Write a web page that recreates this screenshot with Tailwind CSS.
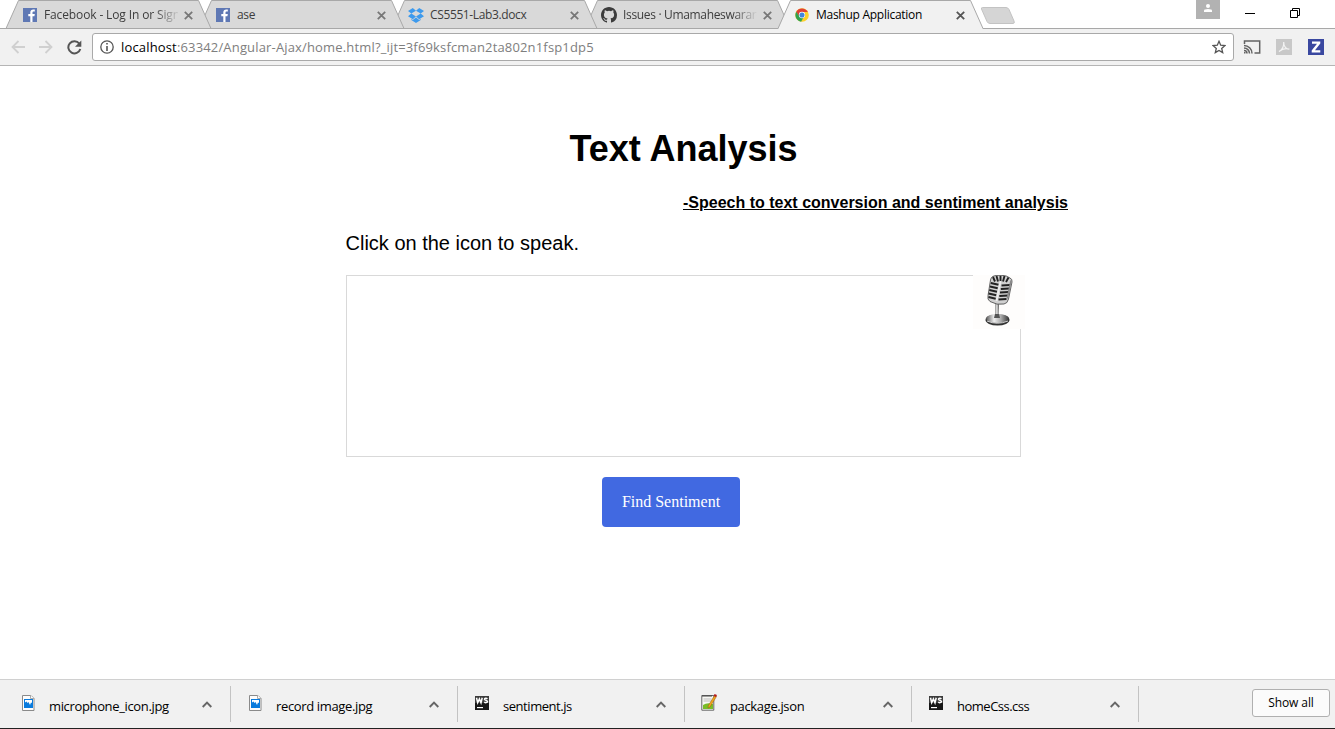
<!DOCTYPE html>
<html lang="en">
<head>
<meta charset="utf-8">
<title>Mashup Application</title>
<script src="https://cdn.jsdelivr.net/npm/@tailwindcss/browser@4"></script>
</head>
<body class="w-[1335px] h-[729px] overflow-hidden bg-white flex flex-col font-['Open_Sans','Noto_Sans',sans-serif] text-black">
<svg class="hidden">
  <symbol id="fb" viewBox="0 0 14 14"><path fill="#5f78b4" d="M0 0h14v14H0z"/><path fill="#fff" d="M7.3 14V8.3H5.3V6.1h2V4.6c0-2 1.1-3.1 3-3.1.8 0 1.5.1 1.5.1v2h-1.1c-.9 0-1.2.5-1.2 1.1v1.4h2.3l-.4 2.2H9.5V14z"/></symbol>
  <symbol id="close" viewBox="0 0 9 9"><path d="M.8.8l7.4 7.4M8.2.8L.8 8.2" stroke="currentColor" stroke-width="1.8" fill="none"/></symbol>
  <symbol id="chev" viewBox="0 0 10 7"><path d="M.7 6L5 1.6 9.300 6" stroke="#666" stroke-width="1.9" fill="none"/></symbol>
  <symbol id="img" viewBox="0 0 13 16"><path fill="#fdfdfd" stroke="#8a8a8a" d="M.5.5h8.500l3 3v12H.5z"/><path fill="#fff" stroke="#aaa" d="M8.500.5v3h3.500"/><path fill="#0a7bdd" d="M2 4h9v9H2z"/><path fill="#fff" d="M3 5h7v3L9 7.500 8 10 6.500 7 5.500 8 4.500 6.500 3 7.500z"/></symbol>
  <symbol id="ws" viewBox="0 0 14 14"><path fill="#161616" d="M0 0h14v14H0z"/><path d="M0 0h14v7H0z" fill="#3c3c3c"/><path d="M1.500 1.800l1.200 5L4.400 3l1.600 3.800 1.200-5M12.400 2.900c-.8-.8-2.900-.8-2.900.4 0 1.400 3 .7 3 2.200 0 1.400-2.300 1.400-3.200.5" fill="none" stroke="#fff" stroke-width="1.500"/><path d="M2 11h6v1.200H2z" fill="#fff"/></symbol>
</svg>

<header class="relative h-[29px] shrink-0">
  <svg class="absolute left-0 top-0" width="1335" height="29" viewBox="0 0 1335 29" fill="#d9d9d9" stroke="#a8a8a8">
    <path d="M585 28.500L597.500.500H777.500L790 28.500z"/>
    <path d="M392 28.500L404.500.500H584.500L597 28.500z"/>
    <path d="M199 28.500L211.500.500H391.500L404 28.500z"/>
    <path d="M6 28.500L18.500.500H198.500L211 28.500z"/>
    <path d="M0 28.500H1335"/>
    <path fill="#f1f1f1" stroke="none" d="M778 29L790.500.500H970.500L983 29z"/>
    <path fill="none" d="M778 28.500L790.500.500H970.500L983 28.500"/>
    <path stroke="#c3c3c3" fill="#d5d5d5" d="M982.500 7.500H1006q2 0 3 2L1014 21q1 2.500-1 2.500H990q-2 0-3-2L981.500 9q-.5-1.500 1-1.500z"/>
  </svg>
  <div class="relative flex h-[29px] pl-[23px] text-[12px] leading-[30px] text-[#3d3d3d] whitespace-nowrap">
    <div class="w-[193px] flex items-center">
      <svg class="w-[14px] h-[14px] mt-px shrink-0"><use href="#fb"/></svg>
      <span class="ml-[7px] w-[134px] tracking-[-0.13px] [mask-image:linear-gradient(to_right,black_110px,transparent_137px)]">Facebook - Log In or Sign</span>
      <svg class="ml-[6px] mt-px w-[9px] h-[9px] text-[#777]"><use href="#close"/></svg>
    </div>
    <div class="w-[193px] flex items-center">
      <svg class="w-[14px] h-[14px] mt-px shrink-0"><use href="#fb"/></svg>
      <span class="ml-[7px] w-[134px] tracking-[-0.3px]">ase</span>
      <svg class="ml-[6px] mt-px w-[9px] h-[9px] text-[#777]"><use href="#close"/></svg>
    </div>
    <div class="w-[193px] flex items-center">
      <svg class="-ml-px w-4 h-[15px] mt-px shrink-0" viewBox="0 0 16 15" fill="#3d9aed"><path d="M4.800 0L0 3l3.300 2.600L8 2.700zM11.200 0L8 2.700l4.700 2.900L16 3zM0 8.200l4.800 3L8 8.500 3.300 5.600zM12.700 5.600L8 8.500l3.200 2.700 4.800-3zM8 9.400l-3.200 2.600-1.500-.9v1L8 15l4.700-2.900v-1l-1.500.9z"/></svg>
      <span class="ml-[6px] w-[134px] tracking-[-0.37px]">CS5551-Lab3.docx</span>
      <svg class="ml-[6px] mt-px w-[9px] h-[9px] text-[#777]"><use href="#close"/></svg>
    </div>
    <div class="w-[193px] flex items-center">
      <svg class="-ml-px w-4 h-4 mt-px shrink-0" viewBox="0 0 16 16" fill="#3c3c3c"><path d="M8 0C3.580 0 0 3.580 0 8c0 3.540 2.290 6.530 5.470 7.590.4.070.55-.17.55-.38v-1.490c-2.230.49-2.690-.94-2.690-.94-.36-.93-.89-1.170-.89-1.170-.73-.5.050-.49.050-.49.81.060 1.230.83 1.230.83.720 1.230 1.880.88 2.330.67.070-.52.280-.88.510-1.080-1.780-.2-3.640-.89-3.640-3.950 0-.87.310-1.590.82-2.150-.08-.2-.36-1.020.08-2.120 0 0 .67-.21 2.200.82a7.600 7.600 0 014 0c1.530-1.040 2.200-.82 2.200-.82.440 1.100.160 1.920.080 2.120.51.560.82 1.270.82 2.150 0 3.070-1.870 3.750-3.650 3.950.29.250.54.730.54 1.480v2.190c0 .21.150.46.550.38A8 8 0 0016 8c0-4.420-3.580-8-8-8z"/></svg>
      <span class="ml-[6px] w-[134px] tracking-[-0.33px] [mask-image:linear-gradient(to_right,black_110px,transparent_135px)]">Issues · Umamaheswarare</span>
      <svg class="ml-[6px] mt-px w-[9px] h-[9px] text-[#777]"><use href="#close"/></svg>
    </div>
    <div class="w-[193px] flex items-center text-black">
      <svg class="w-[14px] h-[14px] mt-px shrink-0" viewBox="0 0 16 16"><circle cx="8" cy="8" r="7.800" fill="#fdd02b"/><path fill="#e04135" d="M1.300 4.500A7.700 7.700 0 0114.700 4.600H8L5 9.800z"/><path fill="#32a350" d="M1.400 4.400A7.600 7.600 0 007 15.600L10 10 5 9.500z"/><circle cx="8" cy="8" r="3.600" fill="#fff"/><circle cx="8" cy="8" r="2.900" fill="#4285dc"/></svg>
      <span class="ml-[7px] w-[134px] tracking-[-0.27px]">Mashup Application</span>
      <svg class="ml-[6px] mt-px w-[9px] h-[9px] text-[#555]"><use href="#close"/></svg>
    </div>
    <div class="flex items-start ml-[208px]">
      <svg width="24" height="19" viewBox="0 0 24 19"><path fill="#b2b2b2" d="M0 0h24v19H0z"/><circle cx="12" cy="6" r="2" fill="#fff"/><path fill="#fff" d="M8 12v-1.500q0-1.500 4-1.500t4 1.500V12z"/></svg>
      <svg class="ml-[25px] mt-[13px]" width="10" height="1"><path d="M0 0h10v1H0z"/></svg>
      <svg class="ml-[35px] mt-2" width="11" height="11" viewBox="0 0 11 11" fill="none" stroke="#000"><path d="M.5 2.500h7v7h-7zM2.500 2.500v-2h7v7h-2"/></svg>
    </div>
  </div>
</header>

<nav class="h-[37px] shrink-0 bg-[#f1f1f1] border-b border-[#b5b5b5] flex items-center pl-[11px] pr-[11px]">
  <svg width="14" height="14" viewBox="0 0 14 14" fill="none" stroke="#d0d0d0" stroke-width="1.800"><path d="M14 7H1.500M7.500 1L1.500 7l6 6"/></svg>
  <svg class="ml-[14px]" width="14" height="14" viewBox="0 0 14 14" fill="none" stroke="#d0d0d0" stroke-width="1.800"><path d="M0 7h12.500M6.500 1l6 6-6 6"/></svg>
  <svg class="ml-[14px]" width="15" height="15" viewBox="0 0 15 15"><path d="M12.300 3.600A6.100 6.100 0 1013.300 9" fill="none" stroke="#555" stroke-width="2"/><path d="M14.300.5v6.300H8z" fill="#555"/></svg>
  <div class="ml-[10px] w-[1142px] h-7 bg-white border border-[#a9a9a9] rounded-[3px] flex items-center pl-[7px] pr-[7px]">
    <svg width="14" height="14" viewBox="0 0 14 14"><circle cx="7" cy="7" r="6.200" fill="none" stroke="#555" stroke-width="1.300"/><path d="M6.200 3h1.600v1.600H6.200zM6.200 6h1.600v5H6.200z" fill="#555"/></svg>
    <span class="ml-[7px] text-[13px] leading-[26px] text-[#7e7e7e] grow whitespace-nowrap tracking-[0.16px]"><span class="text-black">localhost</span>:63342/Angular-Ajax/home.html?_ijt=3f69ksfcman2ta802n1fsp1dp5</span>
    <svg width="14" height="14" viewBox="0 0 14 14" fill="none" stroke="#555" stroke-width="1.300"><path d="M7 1.300l1.700 3.900 4.200.4-3.200 2.800 1 4.200L7 10.400l-3.700 2.200 1-4.200L1.100 5.600l4.200-.4z"/></svg>
  </div>
  <svg class="ml-[9px]" width="18" height="14" viewBox="0 0 18 14" fill="none" stroke="#636363" stroke-width="1.500"><path d="M1.500 4V.900h15.200v12H11.500M1 10.500a3 3 0 013 3M1 8a5.500 5.500 0 015.500 5.500M1 5.500a8 8 0 018 8"/><path d="M1 12h1.500v1.500H1z" fill="#636363" stroke="none"/></svg>
  <svg class="ml-[15px]" width="16" height="16" viewBox="0 0 16 16"><path fill="#c8c8c8" d="M0 0h16v16H0z"/><path d="M3 12.500c3-1.500 5-5 4.700-9.500C7.500 7 10 10 13.300 10.200 10 9 6 10 3 12.500z" fill="none" stroke="#f3f3f3" stroke-width="1.200"/></svg>
  <svg class="ml-4" width="16" height="16" viewBox="0 0 16 16"><path fill="#3a48a0" d="M0 0h16v16H0z"/><path fill="#fff" d="M4 2.500h8.300v2L7 11.300h5.300v2.200H3.700v-2L9 4.700H4z"/></svg>
</nav>

<main class="h-[613px] shrink-0 relative font-['Liberation_Sans',sans-serif] flex flex-col">
  <h1 class="mt-[62px] ml-[569.5px] text-[36px] leading-[42px] font-bold whitespace-nowrap">Text Analysis</h1>
  <h4 class="mt-[24px] ml-[683px] text-[16px] leading-[18px] font-bold underline whitespace-nowrap">-Speech to text conversion and sentiment analysis</h4>
  <p class="mt-[19px] ml-[345.5px] text-[20px] leading-[24px] whitespace-nowrap">Click on the icon to speak.</p>
  <div class="relative mt-[20px] ml-[346px] w-[675px] h-[182px] border border-[#d9d9d9]">
    <svg class="absolute -right-[5px] -top-px" width="52" height="54" viewBox="0 0 52 54">
      <defs>
        <linearGradient id="metal"><stop stop-color="#555"/><stop offset=".35" stop-color="#eee"/><stop offset=".65" stop-color="#aaa"/><stop offset="1" stop-color="#333"/></linearGradient>
      </defs>
      <path fill="#fefdfc" d="M0 0h52v54H0z"/>
      <path d="M22.500 27h3.500l-.5 14h-3z" fill="url(#metal)"/>
      <ellipse cx="24.500" cy="45" rx="12" ry="5.500" fill="#333"/>
      <ellipse cx="24.500" cy="43.500" rx="11.500" ry="4.500" fill="url(#metal)"/>
      <path d="M22 39h4l1 4h-6z" fill="#555"/>
      <path d="M14 46q10 4.500 21 0" fill="none" stroke="#ccc"/>
      <path d="M19.500 1.500Q22 0 28 0.200T37 3Q39.500 4 39 7L35.500 24q-1 4.500-4.500 5-7 1.500-14-2.500-3-2-2-6L17.500 5q.5-2.500 2-3.500z" fill="#d0d0d0" stroke="#444" stroke-width=".8"/>
      <path d="M20 2l2 4.500M23.500 1l1.500 5.500M27.500.7v5.500M31.500 1l-1.500 5.500M35.500 2.500l-2.500 4.500" stroke="#222" stroke-width="1.900"/>
      <path d="M17.800 8l7.700 1.800M17 11.500l7.700 1.800M16.300 15l7.700 1.800M15.600 18.500l7.700 1.800M15.500 22l7.200 1.800M28.500 10.500l8.500-.5M27.800 14l8.500-.5M27 17.500l8.500-.5M26.300 21l8.500-.5M25.500 24.500l8-.5" stroke="#222" stroke-width="2"/>
      <path d="M27.500 6l-4 20" stroke="#eee" stroke-width="1.700"/>
      <path d="M38 5.500l-3.700 18" stroke="#888" stroke-width="1.500"/>
    </svg>
  </div>
  <button class="mt-[20px] ml-[602px] w-[138px] h-[50px] rounded-[4px] bg-[#4169e1] text-white text-[16px] leading-[50px] font-['Liberation_Serif',serif] whitespace-nowrap">Find Sentiment</button>
</main>

<footer class="h-[49px] shrink-0 bg-[#f1f1f1] border-t border-[#d0d0d0] flex items-start text-[13px] leading-[18px] whitespace-nowrap tracking-[-0.35px]">
  <div class="ml-1 mt-[6px] w-[227px] h-9 border-r border-[#c3c3c3] flex items-center pl-[18px] pr-[18px]">
    <svg class="w-[13px] h-4 -mt-[2px] shrink-0"><use href="#img"/></svg>
    <span class="ml-[14px] mt-[4px] grow">microphone_icon.jpg</span>
    <svg class="w-[10px] h-[7px]"><use href="#chev"/></svg>
  </div>
  <div class="mt-[6px] w-[227px] h-9 border-r border-[#c3c3c3] flex items-center pl-[18px] pr-[18px]">
    <svg class="w-[13px] h-4 -mt-[2px] shrink-0"><use href="#img"/></svg>
    <span class="ml-[14px] mt-[4px] grow">record image.jpg</span>
    <svg class="w-[10px] h-[7px]"><use href="#chev"/></svg>
  </div>
  <div class="mt-[6px] w-[227px] h-9 border-r border-[#c3c3c3] flex items-center pl-[17px] pr-[18px]">
    <svg class="w-[14px] h-[14px] -mt-[2px] shrink-0"><use href="#ws"/></svg>
    <span class="ml-[14px] mt-[4px] grow tracking-[-0.45px]">sentiment.js</span>
    <svg class="w-[10px] h-[7px]"><use href="#chev"/></svg>
  </div>
  <div class="mt-[6px] w-[227px] h-9 border-r border-[#c3c3c3] flex items-center pl-[16px] pr-[18px]">
    <svg class="w-[16px] h-[17px] -mt-[3px] shrink-0" viewBox="0 0 16 17"><path d="M.8 1.500h12v14.700H.8z" fill="#f8f8f4" stroke="#666"/><path d="M2 1v2M4 1v2M6 1v2M8 1v2M10 1v2" stroke="#444"/><path d="M2.500 5h8M2.500 7h8" stroke="#bbb"/><path d="M2 11q4-3 10-1v5H2z" fill="#79bd27"/><path d="M13.500 1.500l2 1L9 13l-2 1 .3-2.300z" fill="#f3a51b" stroke="#8c5b17" stroke-width=".5"/><path d="M13.500 0L16 1l-1 2-2.300-1z" fill="#b51d1d"/></svg>
    <span class="ml-[13px] mt-[4px] grow">package.json</span>
    <svg class="w-[10px] h-[7px]"><use href="#chev"/></svg>
  </div>
  <div class="mt-[6px] w-[227px] h-9 border-r border-[#c3c3c3] flex items-center pl-[17px] pr-[18px]">
    <svg class="w-[14px] h-[14px] -mt-[2px] shrink-0"><use href="#ws"/></svg>
    <span class="ml-[14px] mt-[4px] grow tracking-[-0.5px]">homeCss.css</span>
    <svg class="w-[10px] h-[7px]"><use href="#chev"/></svg>
  </div>
  <button class="ml-[113px] mt-[9px] w-[78px] h-7 bg-[#fbfbfb] border border-[#b0b0b0] rounded-[3px] text-[12px] tracking-[-0.1px]">Show all</button>
</footer>
<div class="h-px shrink-0 bg-[#222]"></div>
</body>
</html>
